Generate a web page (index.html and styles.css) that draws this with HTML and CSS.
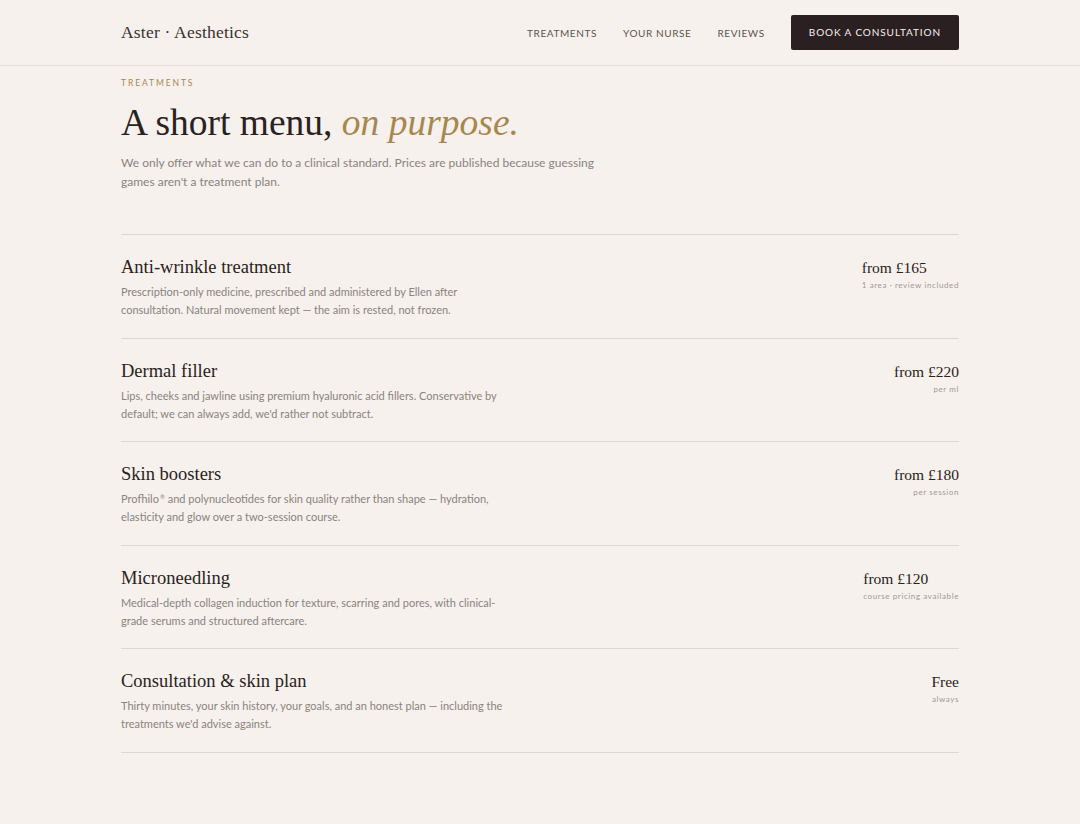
FILE: index.html
```html
<!DOCTYPE html>
<html lang="en">
<head>
    <meta charset="UTF-8">
    <meta name="viewport" content="width=device-width, initial-scale=1.0">
    <title>Aster · Aesthetics - Treatments</title>
    <link rel="stylesheet" href="styles.css">
</head>
<body>
    <div class="header">
        <div class="container header-inner">
            <div class="logo">Aster · Aesthetics</div>
            <div class="nav">
                <a href="#" class="nav-link">Treatments</a>
                <a href="#" class="nav-link">Your nurse</a>
                <a href="#" class="nav-link">Reviews</a>
                <a href="#" class="book-btn">Book a consultation</a>
            </div>
        </div>
    </div>

    <div class="container">
        <!-- intro -->
        <div class="intro">
            <div class="eyebrow">Treatments</div>
            <h1>A short menu, <em>on purpose.</em></h1>
            <p class="lead">We only offer what we can do to a clinical standard. Prices are published because guessing games aren't a treatment plan.</p>
        </div>

        <!-- treatment list -->
        <div class="treatments">
            <div class="treatment">
                <div class="treatment-info">
                    <h2>Anti-wrinkle treatment</h2>
                    <p>Prescription-only medicine, prescribed and administered by Ellen after consultation. Natural movement kept — the aim is rested, not frozen.</p>
                </div>
                <div class="price">
                    <span class="amount">from £165</span>
                    <span class="note">1 area · review included</span>
                </div>
            </div>
            <div class="treatment">
                <div class="treatment-info">
                    <h2>Dermal filler</h2>
                    <p>Lips, cheeks and jawline using premium hyaluronic acid fillers. Conservative by default; we can always add, we'd rather not subtract.</p>
                </div>
                <div class="price">
                    <span class="amount">from £220</span>
                    <span class="note">per ml</span>
                </div>
            </div>
            <div class="treatment">
                <div class="treatment-info">
                    <h2>Skin boosters</h2>
                    <p>Profhilo<sup>®</sup> and polynucleotides for skin quality rather than shape — hydration, elasticity and glow over a two-session course.</p>
                </div>
                <div class="price">
                    <span class="amount">from £180</span>
                    <span class="note">per session</span>
                </div>
            </div>
            <div class="treatment">
                <div class="treatment-info">
                    <h2>Microneedling</h2>
                    <p>Medical-depth collagen induction for texture, scarring and pores, with clinical-grade serums and structured aftercare.</p>
                </div>
                <div class="price">
                    <span class="amount">from £120</span>
                    <span class="note">course pricing available</span>
                </div>
            </div>
            <div class="treatment">
                <div class="treatment-info">
                    <h2>Consultation &amp; skin plan</h2>
                    <p>Thirty minutes, your skin history, your goals, and an honest plan — including the treatments we'd advise against.</p>
                </div>
                <div class="price">
                    <span class="amount">Free</span>
                    <span class="note">always</span>
                </div>
            </div>
        </div>
    </div>
</body>
</html>
```

FILE: styles.css
```css
* {
    box-sizing: border-box;
    margin: 0;
    padding: 0;
}
body {
    font-family: Lato, "Noto Sans", sans-serif;
    background-color: #f6f1ec;
    color: #2a2221;
}
.container {
    max-width: 838px;
    margin: 0 auto;
}
.header {
    border-bottom: 1px solid #e5ded7;
}
.header-inner {
    display: flex;
    justify-content: space-between;
    align-items: center;
    height: 65px;
}
.logo {
    font-family: "Liberation Serif", serif;
    font-size: 17.5px;
    color: #3a3231;
    letter-spacing: 0.2px;
}
.nav {
    display: flex;
    align-items: center;
}
.nav-link {
    font-size: 10px;
    letter-spacing: 0.6px;
    text-transform: uppercase;
    color: #5c5452;
    text-decoration: none;
    margin-right: 26px;
}
.book-btn {
    display: block;
    background-color: #2a2021;
    color: #f6f1ec;
    font-size: 10px;
    letter-spacing: 0.9px;
    text-transform: uppercase;
    text-decoration: none;
    white-space: nowrap;
    padding: 0 18px;
    height: 35px;
    line-height: 35px;
    border-radius: 2px;
}
.intro {
    padding-top: 11px;
    margin-bottom: 43px;
}
.eyebrow {
    font-size: 8.5px;
    line-height: 12px;
    letter-spacing: 1.9px;
    text-transform: uppercase;
    color: #a8874f;
    margin-bottom: 12px;
}
h1 {
    font-family: "Liberation Serif", serif;
    font-weight: normal;
    font-size: 37.5px;
    line-height: 44px;
    color: #2a2221;
    margin-bottom: 8px;
}
h1 em {
    color: #a8874f;
}
.lead {
    font-size: 12px;
    line-height: 19px;
    color: #8a8380;
    max-width: 490px;
}
.treatments {
    border-top: 1px solid #dfd8d1;
}
.treatment {
    display: flex;
    justify-content: space-between;
    align-items: flex-start;
    padding: 20px 0 18.5px;
    border-bottom: 1px solid #dfd8d1;
}
.treatment-info h2 {
    font-family: "Liberation Serif", serif;
    font-weight: normal;
    font-size: 18.5px;
    line-height: 24px;
    color: #2a2221;
    margin-bottom: 4px;
}
.treatment-info p {
    font-size: 11px;
    line-height: 18px;
    color: #8a8380;
    max-width: 385px;
}
.treatment-info sup {
    font-size: 6px;
    line-height: 0;
    vertical-align: 4px;
    margin-left: 1px;
}
.price {
    display: flex;
    flex-direction: column;
    align-items: flex-end;
    padding-top: 1px;
}
.amount {
    align-self: flex-start;
    font-family: "Liberation Serif", serif;
    font-size: 15.5px;
    line-height: 24px;
    color: #2a2221;
}
.note {
    font-size: 8px;
    letter-spacing: 0.6px;
    color: #a09996;
    line-height: 10px;
}
```
